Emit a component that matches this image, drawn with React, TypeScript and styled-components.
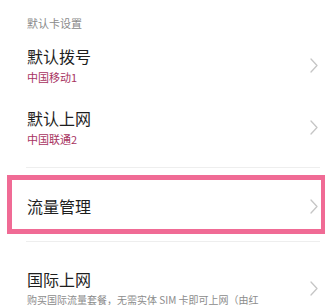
import React from 'react';
import styled, { createGlobalStyle } from 'styled-components';

const GlobalStyle = createGlobalStyle`
    html, body {
        margin: 0;
        padding: 0;
        background: #ffffff;
    }
    body {
        font-family: "Noto Sans CJK SC", "Noto Sans", sans-serif;
        -webkit-font-smoothing: antialiased;
    }
`;

const Page = styled.div`
    width: 335px;
    height: 305px;
    overflow: hidden;
    background: #ffffff;
`;

const SectionTitle = styled.div`
    padding: 15px 0 5px 27px;
    font-size: 11px;
    line-height: 16px;
    color: #8a8a8a;
`;

const Row = styled.div<{ $pad: string; $highlight?: boolean }>`
    position: relative;
    display: flex;
    flex-direction: row;
    align-items: center;
    justify-content: space-between;
    padding: ${(p) => p.$pad};
    padding-left: 27px;
    padding-right: 17px;

    ${(p) =>
        p.$highlight &&
        `
        &::after {
            content: "";
            position: absolute;
            left: 7px;
            right: 10px;
            top: 7px;
            bottom: 7px;
            border: 5px solid #f06b95;
            border-right-width: 4px;
            pointer-events: none;
        }
    `}
`;

const TextBlock = styled.div`
    display: flex;
    flex-direction: column;
    gap: 2px;
    min-width: 0;
    align-self: flex-start;
`;

const Label = styled.div`
    font-size: 16px;
    line-height: 22px;
    color: #1e1e1e;
`;

const SubLabel = styled.div<{ $muted?: boolean }>`
    font-size: ${(p) => (p.$muted ? '10px' : '11px')};
    line-height: 16px;
    color: ${(p) => (p.$muted ? '#8c8c8c' : '#a8335f')};
    white-space: nowrap;
`;

const Divider = styled.div`
    height: 1px;
    margin: 0 15px 0 26px;
    background: #eeeeee;
`;

const ChevronWrap = styled.div`
    flex: none;
    width: 8px;
    height: 15px;
    display: flex;
`;

function Chevron() {
    return (
        <ChevronWrap>
            <svg width="8" height="15" viewBox="0 0 8 15">
                <polyline points="1,1 7,7.5 1,14" fill="none" stroke="#c6c6c6" strokeWidth="1.3" strokeLinecap="round" strokeLinejoin="round" />
            </svg>
        </ChevronWrap>
    );
}

export default function App() {
    return (
        <Page>
            <GlobalStyle />
            <SectionTitle>默认卡设置</SectionTitle>
            <Row $pad="9px 0 13px">
                <TextBlock>
                    <Label>默认拨号</Label>
                    <SubLabel>中国移动1</SubLabel>
                </TextBlock>
                <Chevron />
            </Row>
            <Row $pad="9px 0 20px">
                <TextBlock>
                    <Label>默认上网</Label>
                    <SubLabel>中国联通2</SubLabel>
                </TextBlock>
                <Chevron />
            </Row>
            <Divider />
            <Row $pad="27px 0 24px" $highlight>
                <TextBlock>
                    <Label>流量管理</Label>
                </TextBlock>
                <Chevron />
            </Row>
            <Divider />
            <Row $pad="26px 0 62px">
                <TextBlock>
                    <Label>国际上网</Label>
                    <SubLabel $muted>购买国际流量套餐，无需实体 SIM 卡即可上网（由红</SubLabel>
                </TextBlock>
                <Chevron />
            </Row>
        </Page>
    );
}
